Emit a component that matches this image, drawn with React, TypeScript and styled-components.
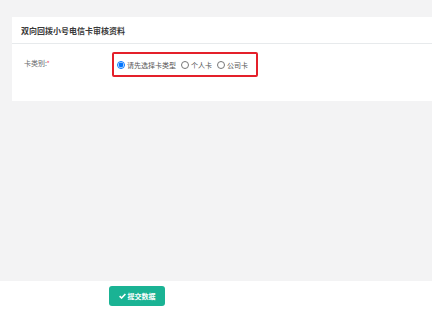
import React from "react";
import styled, { createGlobalStyle } from "styled-components";

const Global = createGlobalStyle`
  html, body { margin: 0; padding: 0; background: #f3f3f4; }
  body { font-family: "Noto Sans CJK SC", "Noto Sans", sans-serif; }
  * { box-sizing: border-box; }
`;

const Page = styled.div`
  display: flex;
  flex-direction: column;
  width: 432px;
  height: 312px;
  overflow: hidden;
`;

const Content = styled.div`
  flex: 0 0 281px;
  padding: 17px 0 0 12px;
  background: #f3f3f4;
`;

const Card = styled.div`
  background: #ffffff;
`;

const CardHeader = styled.div`
  height: 27px;
  display: flex;
  align-items: center;
  padding-left: 9px;
  border-bottom: 1px solid #e7eaec;
  font-size: 8px;
  font-weight: 600;
  color: #3a3a3a;
`;

const CardBody = styled.div`
  height: 57px;
  padding: 8px 0 0 12px;
`;

const FormRow = styled.div`
  display: flex;
  align-items: flex-start;
`;

const Label = styled.div`
  width: 88px;
  padding-top: 6px;
  font-size: 7px;
  line-height: 10px;
  color: #676a6c;
`;

const Required = styled.span`
  color: #ed5565;
`;

const RadioBox = styled.div`
  display: flex;
  align-items: center;
  width: 146px;
  height: 25px;
  padding-left: 3px;
  border: 2px solid #e4202a;
  border-radius: 2px;
`;

const RadioLabel = styled.label`
  display: flex;
  align-items: center;
  margin-right: 5px;
  font-size: 7px;
  line-height: 10px;
  color: #555;
`;

const Radio = styled.input`
  width: 8px;
  height: 8px;
  margin: 0 2px 0 0;
`;

const Footer = styled.div`
  flex: 1;
  background: #ffffff;
  padding: 5px 0 0 109px;
`;

const SubmitButton = styled.button`
  display: flex;
  align-items: center;
  justify-content: center;
  gap: 2px;
  width: 56px;
  height: 20px;
  padding: 0;
  border: none;
  border-radius: 3px;
  background: #1ab394;
  color: #ffffff;
  font-family: "Noto Sans CJK SC", sans-serif;
  font-size: 7px;
  font-weight: 600;
`;

const Check = () => (
  <svg width="7" height="6" viewBox="0 0 7 6">
    <path d="M0.6 3.1 L2.6 5 L6.4 1" stroke="#fff" strokeWidth="1.6" fill="none" />
  </svg>
);

export default function App() {
  return (
    <>
      <Global />
      <Page>
        <Content>
          <Card>
            <CardHeader>双向回拨小号电信卡审核资料</CardHeader>
            <CardBody>
              <FormRow>
                <Label>
                  卡类别:<Required>*</Required>
                </Label>
                <RadioBox>
                  <RadioLabel>
                    <Radio type="radio" name="t" defaultChecked />
                    请先选择卡类型
                  </RadioLabel>
                  <RadioLabel>
                    <Radio type="radio" name="t" />
                    个人卡
                  </RadioLabel>
                  <RadioLabel>
                    <Radio type="radio" name="t" />
                    公司卡
                  </RadioLabel>
                </RadioBox>
              </FormRow>
            </CardBody>
          </Card>
        </Content>
        <Footer>
          <SubmitButton>
            <Check />
            提交数据
          </SubmitButton>
        </Footer>
      </Page>
    </>
  );
}
